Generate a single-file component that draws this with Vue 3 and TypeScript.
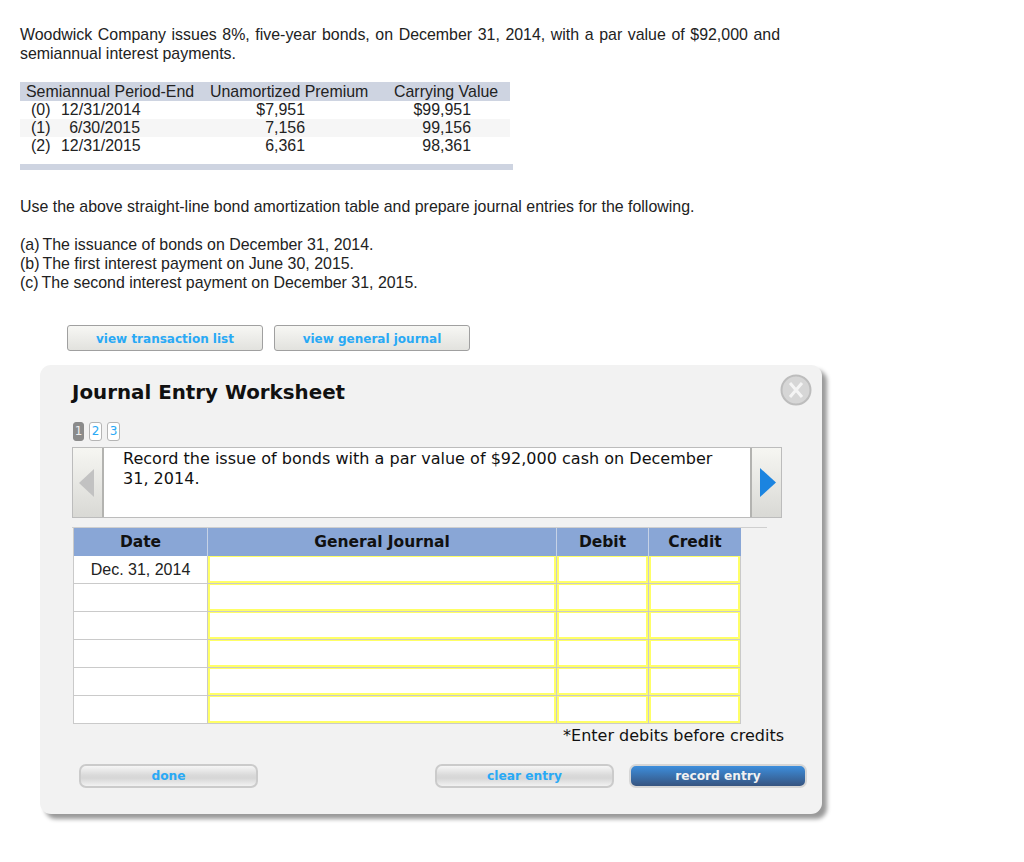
<script setup lang="ts">
const amort = [
  { label: '(0)', date: '12/31/2014', premium: '$7,951', carrying: '$99,951' },
  { label: '(1)', date: '6/30/2015', premium: '7,156', carrying: '99,156' },
  { label: '(2)', date: '12/31/2015', premium: '6,361', carrying: '98,361' },
]
const items = [
  ['(a)', 'The issuance of bonds on December 31, 2014.'],
  ['(b)', 'The first interest payment on June 30, 2015.'],
  ['(c)', 'The second interest payment on December 31, 2015.'],
]
const rows = ['Dec. 31, 2014', '', '', '', '', '']
</script>

<template>
  <div class="page">
    <p class="intro">Woodwick Company issues 8%, five-year bonds, on December 31, 2014, with a par value of $92,000 and semiannual interest payments.</p>

    <div class="amort">
      <div class="a-row a-head">
        <span class="c1">Semiannual Period-End</span>
        <span class="c2">Unamortized Premium</span>
        <span class="c3">Carrying Value</span>
      </div>
      <div v-for="(r, i) in amort" :key="r.label" class="a-row" :class="{ alt: i === 1 }">
        <span class="c1 period"><span class="lab">{{ r.label }}</span><span class="dt">{{ r.date }}</span></span>
        <span class="c2 num">{{ r.premium }}</span>
        <span class="c3 num">{{ r.carrying }}</span>
      </div>
      <div class="a-foot"></div>
    </div>

    <p class="use">Use the above straight-line bond amortization table and prepare journal entries for the following.</p>

    <div class="items">
      <div v-for="it in items" :key="it[0]">{{ it[0] }}<span class="it-text">{{ it[1] }}</span></div>
    </div>

    <div class="views">
      <button class="view-btn">view transaction list</button>
      <button class="view-btn">view general journal</button>
    </div>

    <section class="modal">
      <div class="close">
        <svg width="32" height="32" viewBox="0 0 32 32">
          <circle cx="16" cy="16" r="14.5" fill="#d6d6d6" stroke="#bdbdbd" stroke-width="2" />
          <path d="M10 9 L22 23 M22 9 L10 23" stroke="#f4f4f4" stroke-width="3" />
        </svg>
      </div>
      <h1>Journal Entry Worksheet</h1>
      <div class="steps">
        <span class="step on">1</span>
        <span class="step">2</span>
        <span class="step">3</span>
      </div>
      <div class="prompt">
        <div class="arrow left">
          <svg width="15" height="28" viewBox="0 0 15 28"><path d="M15 0 V28 L0 14 Z" fill="#c2c2c2" /></svg>
        </div>
        <div class="prompt-text">Record the issue of bonds with a par value of $92,000 cash on December 31, 2014.</div>
        <div class="arrow right">
          <svg width="16" height="29" viewBox="0 0 16 29"><path d="M0 0 V29 L16 14.5 Z" fill="#1b84e0" /></svg>
        </div>
      </div>
      <div class="rule"></div>
      <div class="journal">
        <div class="j-row j-head">
          <div>Date</div>
          <div>General Journal</div>
          <div>Debit</div>
          <div>Credit</div>
        </div>
        <div v-for="(d, i) in rows" :key="i" class="j-row">
          <div class="j-date">{{ d }}</div>
          <div class="cell"></div>
          <div class="cell"></div>
          <div class="cell"></div>
        </div>
      </div>
      <div class="note">*Enter debits before credits</div>
      <div class="actions">
        <button class="pill">done</button>
        <div class="actions-right">
          <button class="pill">clear entry</button>
          <button class="pill primary">record entry</button>
        </div>
      </div>
    </section>
  </div>
</template>

<style scoped>
.page {
  width: 1024px;
  height: 862px;
  box-sizing: border-box;
  padding: 25px 0 0 20px;
  background: #fff;
  overflow: hidden;
  font-family: "Liberation Sans", Arial, sans-serif;
  font-size: 15.93px;
  color: #222;
  line-height: 19px;
}
.intro {
  margin: 0;
  width: 760px;
  text-align: justify;
}
.amort {
  margin-top: 19px;
  width: 493px;
}
.a-row {
  display: grid;
  grid-template-columns: 184px 160px 140px;
  width: 490px;
  height: 18px;
  line-height: 18px;
  white-space: nowrap;
  padding-left: 6px;
  box-sizing: border-box;
}
.a-head {
  height: 19px;
  line-height: 19px;
  background: #ced4e1;
}
.a-head .c3 { padding-left: 24px; }
.alt { background: #f6f6f6; }
.period { display: flex; padding-left: 5px; }
.lab { width: 30px; }
.dt { width: 79px; text-align: right; }
.c2.num { text-align: right; padding-right: 65px; }
.c3.num { text-align: right; padding-right: 39px; }
.a-foot {
  margin-top: 9px;
  height: 6px;
  width: 493px;
  background: #ced4e1;
}
.use {
  margin: 27px 0 0;
}
.items {
  margin-top: 19px;
}
.it-text { margin-left: 3px; }
.views {
  display: flex;
  gap: 11px;
  margin: 33px 0 0 47px;
}
.view-btn {
  width: 196px;
  height: 26px;
  padding: 1px 0 0;
  box-sizing: border-box;
  border: 1px solid #a0a0a0;
  border-radius: 3px;
  background: linear-gradient(#f7f7f4, #e2e2de);
  color: #29a9f5;
  font: bold 12px "DejaVu Sans", Verdana, sans-serif;
}
.modal {
  position: relative;
  width: 782px;
  height: 449px;
  box-sizing: border-box;
  margin: 14px 0 0 20px;
  padding: 16px 0 0 32px;
  background: #f2f2f2;
  border-radius: 11px;
  box-shadow: 5px 5px 4px #9a9a9a;
  font-family: "DejaVu Sans", Verdana, sans-serif;
  color: #111;
}
.close {
  position: absolute;
  top: 9px;
  right: 10px;
  width: 32px;
  height: 32px;
}
.close svg { display: block; }
h1 {
  margin: 0;
  font-size: 19.85px;
  line-height: 24px;
  font-weight: bold;
  color: #111;
}
.steps {
  display: flex;
  gap: 5px;
  margin: 17px 0 0 1px;
  height: 19px;
}
.step {
  width: 13px;
  height: 19px;
  box-sizing: border-box;
  border: 1px solid #b5b5b5;
  border-radius: 3px;
  background: #fff;
  color: #29a9f5;
  font: 12px/17px "DejaVu Sans", sans-serif;
  text-align: center;
}
.step.on {
  width: 11px;
  background: #8b8b8b;
  border-color: #8b8b8b;
  color: #eee;
}
.prompt {
  display: flex;
  width: 710px;
  height: 71px;
  box-sizing: border-box;
  margin-top: 6px;
  border: 1px solid #bcbcbc;
  background: #fff;
}
.arrow {
  flex: none;
  width: 31px;
  display: flex;
  align-items: center;
  background: linear-gradient(#f6f6f2, #d9d9d5);
  box-sizing: border-box;
}
.arrow.left {
  justify-content: flex-start;
  padding-left: 6px;
  border-right: 2px solid #b3b3b0;
}
.arrow.right {
  justify-content: flex-start;
  padding-left: 8px;
  border-left: 2px solid #b3b3b0;
}
.prompt-text {
  flex: 1;
  padding: 1px 25px 0 19px;
  font-size: 16.05px;
  line-height: 20px;
  color: #111;
}
.rule {
  width: 695px;
  height: 1px;
  margin-top: 9px;
  background: #cfcfcf;
}
.journal {
  width: 668px;
  margin-left: 1px;
  border-left: 1px solid #cacaca;
  box-sizing: border-box;
}
.j-row {
  display: grid;
  grid-template-columns: 134px 349px 92px 92px;
  height: 28px;
  box-sizing: border-box;
  border-bottom: 1px solid #cacaca;
  background: #cacaca;
}
.j-head {
  border-bottom: 0;
  background: #89a6d6;
  color: #111;
  font-size: 15.5px;
  font-weight: bold;
  line-height: 28px;
  text-align: center;
}
.j-head > div { border-right: 1px solid #c6d2e6; }
.j-head > div:last-child { border-right: 0; }
.j-date {
  background: #fff;
  font-family: "Liberation Sans", Arial, sans-serif;
  font-size: 16px;
  line-height: 27px;
  text-align: center;
  color: #222;
  border-right: 1px solid #cacaca;
}
.cell {
  background: #fff;
  border: 2px solid #ffff66;
  border-top-width: 1px;
  box-sizing: border-box;
  margin-right: 1px;
}
.note {
  width: 712px;
  text-align: right;
  font-size: 16px;
  line-height: 20px;
  margin-top: 2px;
}
.actions {
  display: flex;
  justify-content: space-between;
  width: 728px;
  margin: 18px 0 0 7px;
}
.actions-right {
  display: flex;
  gap: 15px;
}
.pill {
  width: 179px;
  height: 24px;
  padding: 0;
  box-sizing: border-box;
  border: 2px solid #cbcbcb;
  border-radius: 7px;
  background: linear-gradient(#f6f6f6 0%, #dadada 45%, #d6d6d6 60%, #f2f2f2 100%);
  color: #29a9f5;
  font: bold 12.2px/18px "DejaVu Sans", Verdana, sans-serif;
}
.pill.primary {
  width: 178px;
  background: linear-gradient(#3d8edc, #365480);
  border-color: #d6d6d6;
  color: #f2f2f2;
}
</style>

<style>
html, body { margin: 0; background: #fff; }
</style>
